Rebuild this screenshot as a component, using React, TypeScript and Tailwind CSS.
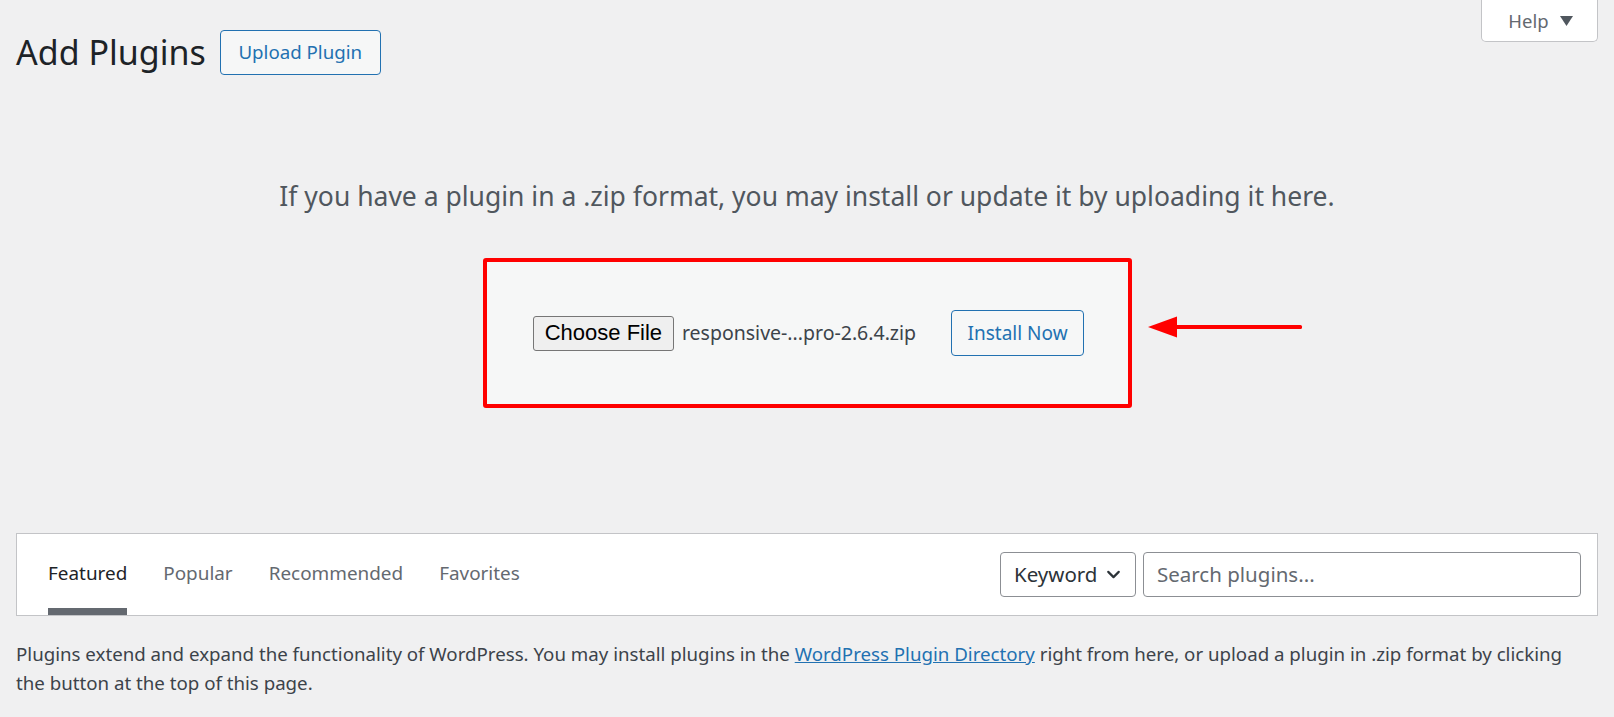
import { ChevronDown } from 'lucide-react'

const SANS = "font-['Noto_Sans','Open_Sans',sans-serif]"

function HelpTab() {
  return (
    <button className="flex h-[42px] w-[117px] items-center justify-center gap-[11px] rounded-b-[5px] border border-t-0 border-[#c3c4c7] bg-white pl-[2px] text-[18.5px] text-[#646970]">
      <span>Help</span>
      <svg width="13" height="10" viewBox="0 0 13 10">
        <polygon points="0,0 13,0 6.5,10" fill="#50575e" />
      </svg>
    </button>
  )
}

function Arrow() {
  return (
    <svg width="156" height="24" viewBox="0 0 156 24" className="mb-[12px] ml-[16px]">
      <polygon points="0,12 29,1.5 29,22.5" fill="#ff0000" />
      <rect x="27" y="10" width="127" height="4" rx="1.5" fill="#ff0000" />
    </svg>
  )
}

function UploadBox() {
  return (
    <div className="flex h-[150px] w-[649px] items-center justify-center rounded-[3px] border-[4px] border-[#ff0000] bg-[#f6f7f7]">
      <div className="flex items-center pl-[3px]">
        <button className="h-[35px] w-[141px] rounded-[3px] border border-[#767676] bg-[#efefef] font-['Liberation_Sans',Arial,sans-serif] text-[22px] leading-none text-black">
          Choose File
        </button>
        <span className="ml-[8px] text-[19.5px] text-[#3c434a]">responsive-...pro-2.6.4.zip</span>
        <button className="ml-[35px] h-[46px] w-[133px] rounded-[4px] border border-[#2271b1] bg-[#f6f7f7] text-[19px] text-[#2271b1]">
          Install Now
        </button>
      </div>
    </div>
  )
}

const tabs = ['Featured', 'Popular', 'Recommended', 'Favorites']

function FilterBar() {
  return (
    <div className="flex h-[83px] items-stretch justify-between border border-[#c3c4c7] bg-white pl-[31px] pr-[16px]">
      <ul className="flex items-stretch gap-[36px]">
        {tabs.map((t, i) => (
          <li
            key={t}
            className={`flex items-center border-b-[7px] pt-[4px] text-[18.9px] ${
              i === 0 ? 'border-[#646970] text-[#1d2327]' : 'border-transparent text-[#646970]'
            }`}
          >
            {t}
          </li>
        ))}
      </ul>
      <div className="flex items-center gap-[7px]">
        <div className="flex h-[45px] w-[136px] items-center justify-between rounded-[4px] border border-[#8c8f94] bg-white pl-[13px] pr-[11px] text-[20.5px] text-[#2c3338]">
          <span>Keyword</span>
          <ChevronDown className="h-[21px] w-[21px]" strokeWidth={2.5} />
        </div>
        <div className="flex h-[45px] w-[438px] items-center rounded-[4px] border border-[#8c8f94] bg-white px-[13px] text-[20.5px] text-[#646970]">
          Search plugins...
        </div>
      </div>
    </div>
  )
}

export default function App() {
  return (
    <div className={`min-h-screen bg-[#f0f0f1] px-[16px] ${SANS}`}>
      <div className="flex items-start justify-between">
        <div className="flex items-center gap-[14px] pt-[30px]">
          <h1 className="text-[34px] leading-[45px] text-[#1d2327]">Add Plugins</h1>
          <button className="h-[45px] w-[161px] rounded-[4px] border border-[#2271b1] bg-[#f6f7f7] text-[18.7px] text-[#2271b1]">
            Upload Plugin
          </button>
        </div>
        <HelpTab />
      </div>

      <div className="mt-[102px] flex flex-col items-center">
        <p className="text-[26.5px] leading-[38px] text-[#50575e]">
          If you have a plugin in a .zip format, you may install or update it by uploading it here.
        </p>
        <div className="mt-[43px] grid w-full grid-cols-[1fr_auto_1fr] items-center">
          <div />
          <UploadBox />
          <div className="flex items-center">
            <Arrow />
          </div>
        </div>
      </div>

      <div className="mt-[125px]">
        <FilterBar />
      </div>

      <p className="mt-[23px] max-w-[1572px] text-[18.7px] leading-[29px] text-[#3c434a]">
        Plugins extend and expand the functionality of WordPress. You may install plugins in the{' '}
        <a className="text-[#2271b1] underline">WordPress Plugin Directory</a> right from here, or upload a plugin in
        .zip format by clicking the button at the top of this page.
      </p>
    </div>
  )
}
